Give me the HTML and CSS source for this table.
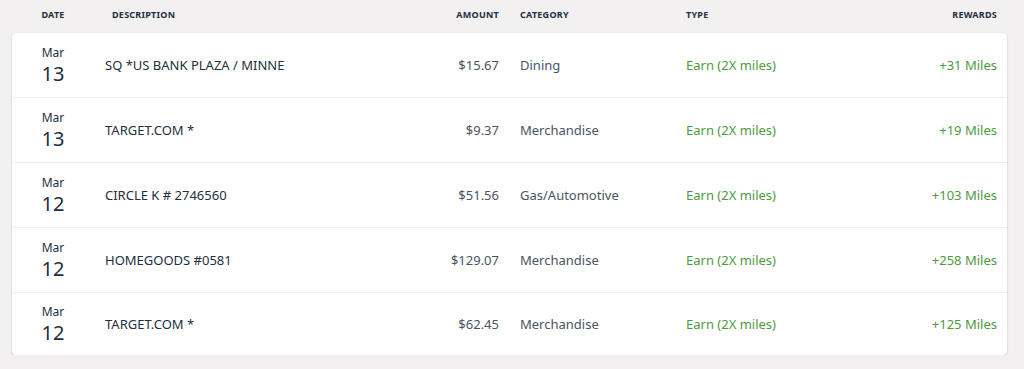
FILE: index.html
```html
<!DOCTYPE html>
<html lang="en">
<head>
<meta charset="utf-8">
<title>Transactions</title>
<link rel="stylesheet" href="styles.css">
</head>
<body>
<div class="page">
  <div class="head grid">
    <div class="h-date">Date</div>
    <div class="h-desc">Description</div>
    <div class="h-amt">Amount</div>
    <div class="h-cat">Category</div>
    <div class="h-type">Type</div>
    <div class="h-rew">Rewards</div>
  </div>
  <div class="card">
    <div class="row grid">
      <div class="date"><span class="mon">Mar</span><span class="day">13</span></div>
      <div class="desc">SQ *US BANK PLAZA / MINNE</div>
      <div class="amt">$15.67</div>
      <div class="cat">Dining</div>
      <div class="type">Earn (2X miles)</div>
      <div class="rew">+31 Miles</div>
    </div>
    <div class="row grid">
      <div class="date"><span class="mon">Mar</span><span class="day">13</span></div>
      <div class="desc">TARGET.COM *</div>
      <div class="amt">$9.37</div>
      <div class="cat">Merchandise</div>
      <div class="type">Earn (2X miles)</div>
      <div class="rew">+19 Miles</div>
    </div>
    <div class="row grid">
      <div class="date"><span class="mon">Mar</span><span class="day">12</span></div>
      <div class="desc">CIRCLE K # 2746560</div>
      <div class="amt">$51.56</div>
      <div class="cat">Gas/Automotive</div>
      <div class="type">Earn (2X miles)</div>
      <div class="rew">+103 Miles</div>
    </div>
    <div class="row grid">
      <div class="date"><span class="mon">Mar</span><span class="day">12</span></div>
      <div class="desc">HOMEGOODS #0581</div>
      <div class="amt">$129.07</div>
      <div class="cat">Merchandise</div>
      <div class="type">Earn (2X miles)</div>
      <div class="rew">+258 Miles</div>
    </div>
    <div class="row grid">
      <div class="date"><span class="mon">Mar</span><span class="day">12</span></div>
      <div class="desc">TARGET.COM *</div>
      <div class="amt">$62.45</div>
      <div class="cat">Merchandise</div>
      <div class="type">Earn (2X miles)</div>
      <div class="rew">+125 Miles</div>
    </div>
  </div>
</div>
</body>
</html>
```

FILE: styles.css
```css
html, body {
  margin: 0;
  padding: 0;
  background: #f2f0f1;
  font-family: "Noto Sans", "Open Sans", sans-serif;
  color: #232f3e;
}
.page {
  padding: 0 17px 0 12px;
}
.grid {
  display: grid;
  grid-template-columns: 82px 311px 94px 187px 156px 155px;
  padding-right: 10px;
  align-items: center;
}
.head {
  height: 29px;
  margin-bottom: 4px;
  font-size: 9px;
  font-weight: 700;
  text-transform: uppercase;
  letter-spacing: 0.25px;
  color: #232f3e;
}
.h-date { text-align: center; }
.h-desc { padding-left: 18px; }
.h-amt { text-align: right; }
.h-cat { padding-left: 21px; }
.h-rew { text-align: right; }
.card {
  background: #fff;
  border-radius: 4px;
  box-shadow: 0 1px 2px rgba(0,0,0,0.18), 0 0 1px rgba(0,0,0,0.08);
}
.row {
  height: 64px;
  border-bottom: 1px solid #eeecec;
  font-size: 13px;
}
.row:last-child {
  border-bottom: none;
  height: 62px;
}
.date {
  display: flex;
  flex-direction: column;
  align-items: center;
  line-height: 1;
}
.mon {
  font-size: 12px;
  color: #232f3e;
}
.day {
  font-size: 20px;
  margin-top: 5px;
  color: #232f3e;
}
.desc {
  padding-left: 11px;
  color: #232f3e;
}
.amt {
  text-align: right;
  color: #4a5463;
}
.cat {
  padding-left: 21px;
  color: #4a5463;
}
.type {
  color: #4e9a3e;
}
.rew {
  text-align: right;
  color: #4e9a3e;
}
```
